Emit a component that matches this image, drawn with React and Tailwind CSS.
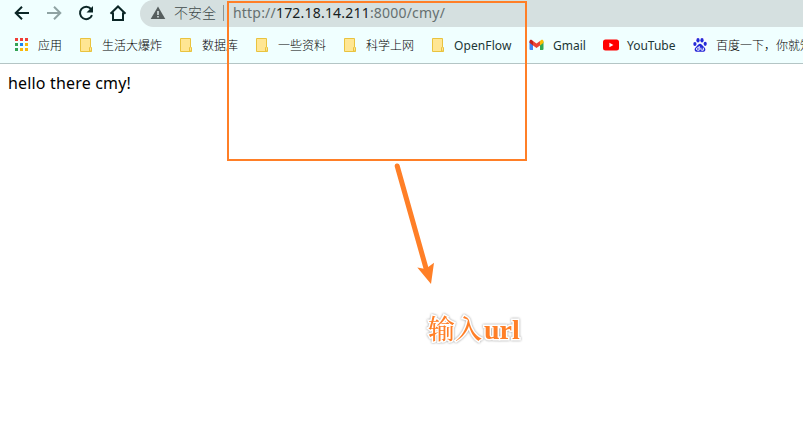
const FONT = "font-['Noto_Sans','Noto_Sans_CJK_SC',sans-serif]";
const CJK = "font-['Noto_Sans_CJK_SC',sans-serif]";

function Folder() {
  return (
    <svg width="16" height="16" viewBox="0 0 16 16">
      <path d="M2.5 1.5h10v10h1v3h-11z" fill="#ffe693" stroke="#e9c33f" />
      <path d="M11.5 14v-3.5q1-1 2 0V14z" fill="#ffe693" stroke="#e9c33f" />
    </svg>
  );
}

function Apps() {
  const colors = ["#f03e36", "#f03e36", "#f03e36", "#33a355", "#1a84f0", "#fab80a", "#33a355", "#fab80a", "#fab80a"];
  return (
    <svg width="16" height="16" viewBox="0 0 16 16" shapeRendering="crispEdges">
      {colors.map((c, i) => (
        <rect key={i} x={1 + (i % 3) * 5} y={1 + Math.floor(i / 3) * 5} width="3" height="3" fill={c} />
      ))}
    </svg>
  );
}

function Gmail() {
  return (
    <svg width="16" height="16" viewBox="0.5 0 16 16">
      <path d="M1 4.500l3.500 2.600V13H2a1 1 0 0 1-1-1z" fill="#4285f4" />
      <path d="M15 4.500l-3.500 2.600V13H14a1 1 0 0 0 1-1z" fill="#34a853" />
      <path d="M11.500 4l1.200-.9c1-.7 2.300 0 2.300 1.200v1.400l-3.500 2.700z" fill="#fbbc04" />
      <path d="M4.500 8.400V4L8 6.600 11.500 4v4.400L8 11z" fill="#ea4335" />
      <path d="M1 4.300v1.400l3.500 2.700V4l-1.200-.9C2.300 2.400 1 3.100 1 4.300z" fill="#c5221f" />
    </svg>
  );
}

function YouTube() {
  return (
    <svg width="16" height="16" viewBox="0 0 16 16">
      <rect x="0" y="2.500" width="16" height="11" rx="2.500" fill="#f00" />
      <path d="M6.400 5.700v4.600l4-2.300z" fill="#fff" />
    </svg>
  );
}

function Baidu() {
  return (
    <svg width="16" height="16" viewBox="0 0 16 16">
      <rect width="16" height="16" fill="#f8fcff" />
      <g fill="#2529d8">
        <ellipse cx="2.900" cy="7" rx="1.600" ry="2.100" />
        <ellipse cx="6" cy="3.300" rx="1.600" ry="2.200" />
        <ellipse cx="10" cy="3.300" rx="1.600" ry="2.200" />
        <ellipse cx="13.200" cy="6.800" rx="1.600" ry="2.100" />
        <path d="M8 6.700c1.600 0 2.200 1.600 3.500 2.700 1.500 1.300 2.300 2.500 1.700 4-.7 1.700-2.500 1.400-5.200 1.400s-4.500.3-5.200-1.400c-.6-1.500.2-2.700 1.700-4C5.800 8.300 6.400 6.700 8 6.700z" />
      </g>
      <g fill="none" stroke="#fff" strokeWidth="1">
        <path d="M7.200 9v4.200H5.500q-1 0-1-1.200t1-1.200h1.700" />
        <path d="M8.900 10.700v1.600q0 .9.900.9h1.500v-2.500" />
      </g>
    </svg>
  );
}

const bookmarks = [
  { icon: Apps, label: "应用", box: "w-[24px] font-light text-black" },
  { icon: Folder, label: "生活大爆炸", box: "w-[60px] font-light text-black" },
  { icon: Folder, label: "数据库", box: "w-[36px] font-light text-black" },
  { icon: Folder, label: "一些资料", box: "w-[48px] font-light text-black" },
  { icon: Folder, label: "科学上网", box: "w-[48px] font-light text-black" },
  { icon: Folder, label: "OpenFlow", box: "w-[59px] tracking-[0.1px] text-[#1c3636]" },
  { icon: Gmail, label: "Gmail", box: "w-[34px] text-[#1c3636]" },
  { icon: YouTube, label: "YouTube", box: "w-[49px] text-[#1c3636]" },
  { icon: Baidu, label: "百度一下，你就知", box: "w-[96px] font-light text-black" },
];

function Toolbar() {
  return (
    <div className="flex h-[27px] items-start">
      <svg className="shrink-0" width="140" height="27" viewBox="0 0 140 27" fill="none" stroke="#0b2626" strokeWidth="2">
        <path d="M29 13H16.500M22 6.700L15.700 13l6.300 6.300" />
        <path d="M47 13h12.500M54 6.700l6.300 6.300-6.300 6.300" stroke="#8fa3a3" />
        <path d="M91 9A6.200 6.200 0 1 0 92 15.200" />
        <path d="M93 6v6.500h-6.500z" fill="#0b2626" stroke="none" />
        <path d="M110.500 13.700L118 6.500l7.500 7.200M113 12.500V20h10v-7.500" />
      </svg>
      <div className="flex h-[27px] min-w-0 grow items-start rounded-bl-[14px] rounded-tl-[14px] bg-[#d5e0e0] pl-[10px]">
        <svg className="mt-[5px] shrink-0" width="16" height="16" viewBox="0 0 16 16">
          <path d="M8 1.500L15.300 14H.7z" fill="#565e5e" />
          <path d="M7.200 6h1.600v4H7.200zM7.200 11h1.600v1.500H7.200z" fill="#d5e0e0" />
        </svg>
        <span className={`${CJK} ml-[8px] mt-[2px] w-[42px] shrink-0 whitespace-nowrap text-[14px] font-light leading-5 text-[#414a4a]`}>不安全</span>
        <span className="ml-[7px] mt-[5px] h-[16px] w-px shrink-0 bg-[#8d9696]" />
        <span className={`${FONT} ml-[9px] mt-[3px] whitespace-nowrap text-[14px] leading-5 tracking-[0.2px] text-[#667070]`}>
          http://<span className="text-[#172020]">172.18.14.211</span>:8000/cmy/
        </span>
      </div>
    </div>
  );
}

export default function App() {
  return (
    <div className="relative h-[435px] w-[803px] overflow-hidden bg-white">
      <header className="h-[64px] border-b border-[#b4c5c5] bg-[#f0ffff]">
        <Toolbar />
        <nav className="flex h-[36px] items-center gap-4 pl-[14px]">
          {bookmarks.map(({ icon: Icon, label, box }) => (
            <div key={label} className="flex shrink-0 items-center gap-2">
              <Icon />
              <span className={`${FONT} ${box} whitespace-nowrap pt-[2px] text-[12px] leading-4`}>{label}</span>
            </div>
          ))}
        </nav>
      </header>
      <main className={`${FONT} pl-2 pt-[8px] text-[16px] leading-[22px] tracking-[0.17px] text-black`}>hello there cmy!</main>

      <div className="absolute left-[227px] top-[1px] h-[160px] w-[300px] border-2 border-[#ff7f27]" />
      <svg className="absolute left-[380px] top-[155px]" width="70" height="135" viewBox="380 155 70 135">
        <path d="M397.200 166L426.500 270" stroke="#ff7f27" strokeWidth="5" strokeLinecap="round" />
        <path d="M431 284L417.300 267.500L425.500 269L434 262.800z" fill="#ff7f27" />
      </svg>
      <div className="absolute left-[428px] top-[310px] whitespace-nowrap font-['Liberation_Serif','Noto_Sans_CJK_SC',serif] text-[28px] font-bold leading-9 text-[#ff7f27] [paint-order:stroke_fill] [-webkit-text-stroke:3px_white] [filter:drop-shadow(0_0_1px_#999)]">
        <span className="mr-[2px] font-['Noto_Serif_CJK_SC','Noto_Sans_CJK_SC',sans-serif] text-[27px] font-medium">输入</span>url
      </div>
    </div>
  );
}
